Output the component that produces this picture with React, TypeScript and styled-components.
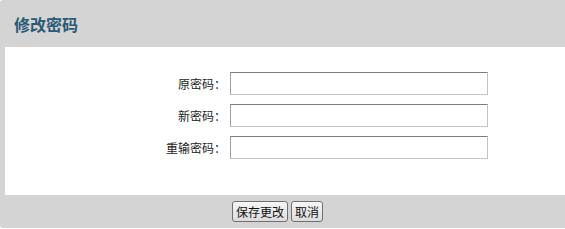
import React from 'react';
import styled, {createGlobalStyle} from "styled-components";

const GlobalStyle = createGlobalStyle`
  html, body {
    margin: 0;
    padding: 0;
    background: #ffffff;
  }
  body {
    font-family: "Liberation Sans", "Noto Sans CJK SC", sans-serif;
    font-size: 12px;
    color: #333;
  }
`

const fields = [
    {id: "old", label: "原密码"},
    {id: "new", label: "新密码"},
    {id: "again", label: "重输密码"},
];

export default function App() {
    return (
        <>
            <GlobalStyle/>
            <Panel>
                <PanelHeader>
                    <PanelTitle>修改密码</PanelTitle>
                </PanelHeader>
                <PanelBody>
                    <Form>
                        {fields.map(f => (
                            <Row key={f.id}>
                                <Label htmlFor={f.id}>{f.label}：</Label>
                                <Input id={f.id} type="password"/>
                            </Row>
                        ))}
                    </Form>
                </PanelBody>
                <PanelFooter>
                    <Button>保存更改</Button>
                    <Button>取消</Button>
                </PanelFooter>
            </Panel>
        </>
    );
}

const Panel = styled.div`
  width: 566px;
  height: 228px;
  box-sizing: border-box;
  background: #d4d4d4;
  border-radius: 3px 0 0 3px;
  padding-left: 5px;
  display: flex;
  flex-direction: column;
`

const PanelHeader = styled.div`
  height: 47px;
  display: flex;
  align-items: center;
  margin-left: -5px;
  padding-left: 14px;
`

const PanelTitle = styled.h2`
  margin: 0;
  font-family: "Noto Sans CJK SC", sans-serif;
  font-size: 16px;
  font-weight: bold;
  color: #2a5a76;
`

const PanelBody = styled.div`
  background: #ffffff;
  height: 148px;
  box-sizing: border-box;
  padding-top: 25px;
`

const Form = styled.div`
  display: flex;
  flex-direction: column;
  gap: 9px;
`

const Row = styled.div`
  display: grid;
  grid-template-columns: 225px 258px;
  align-items: center;
`

const Label = styled.label`
  text-align: right;
  padding-right: 4px;
  font-family: "Noto Sans CJK SC", sans-serif;
  font-size: 12px;
  color: #222;
`

const Input = styled.input`
  width: 258px;
  height: 23px;
  box-sizing: border-box;
  border: 1px solid #c4c4c4;
  border-top-color: #7e7e7e;
  border-left-color: #a0a0a0;
  background: #fff;
  margin: 0;
  padding: 0 3px;
`

const PanelFooter = styled.div`
  flex: 1;
  display: flex;
  justify-content: center;
  align-items: center;
  gap: 3px;
  padding-right: 16px;
`

const Button = styled.button`
  height: 21px;
  padding: 0 3px;
  font-family: "Noto Sans CJK SC", sans-serif;
  font-size: 12px;
  line-height: 1;
  color: #111;
  background: linear-gradient(#f6f6f6, #dcdcdc);
  border: 1px solid #707070;
  border-radius: 3px;
`
